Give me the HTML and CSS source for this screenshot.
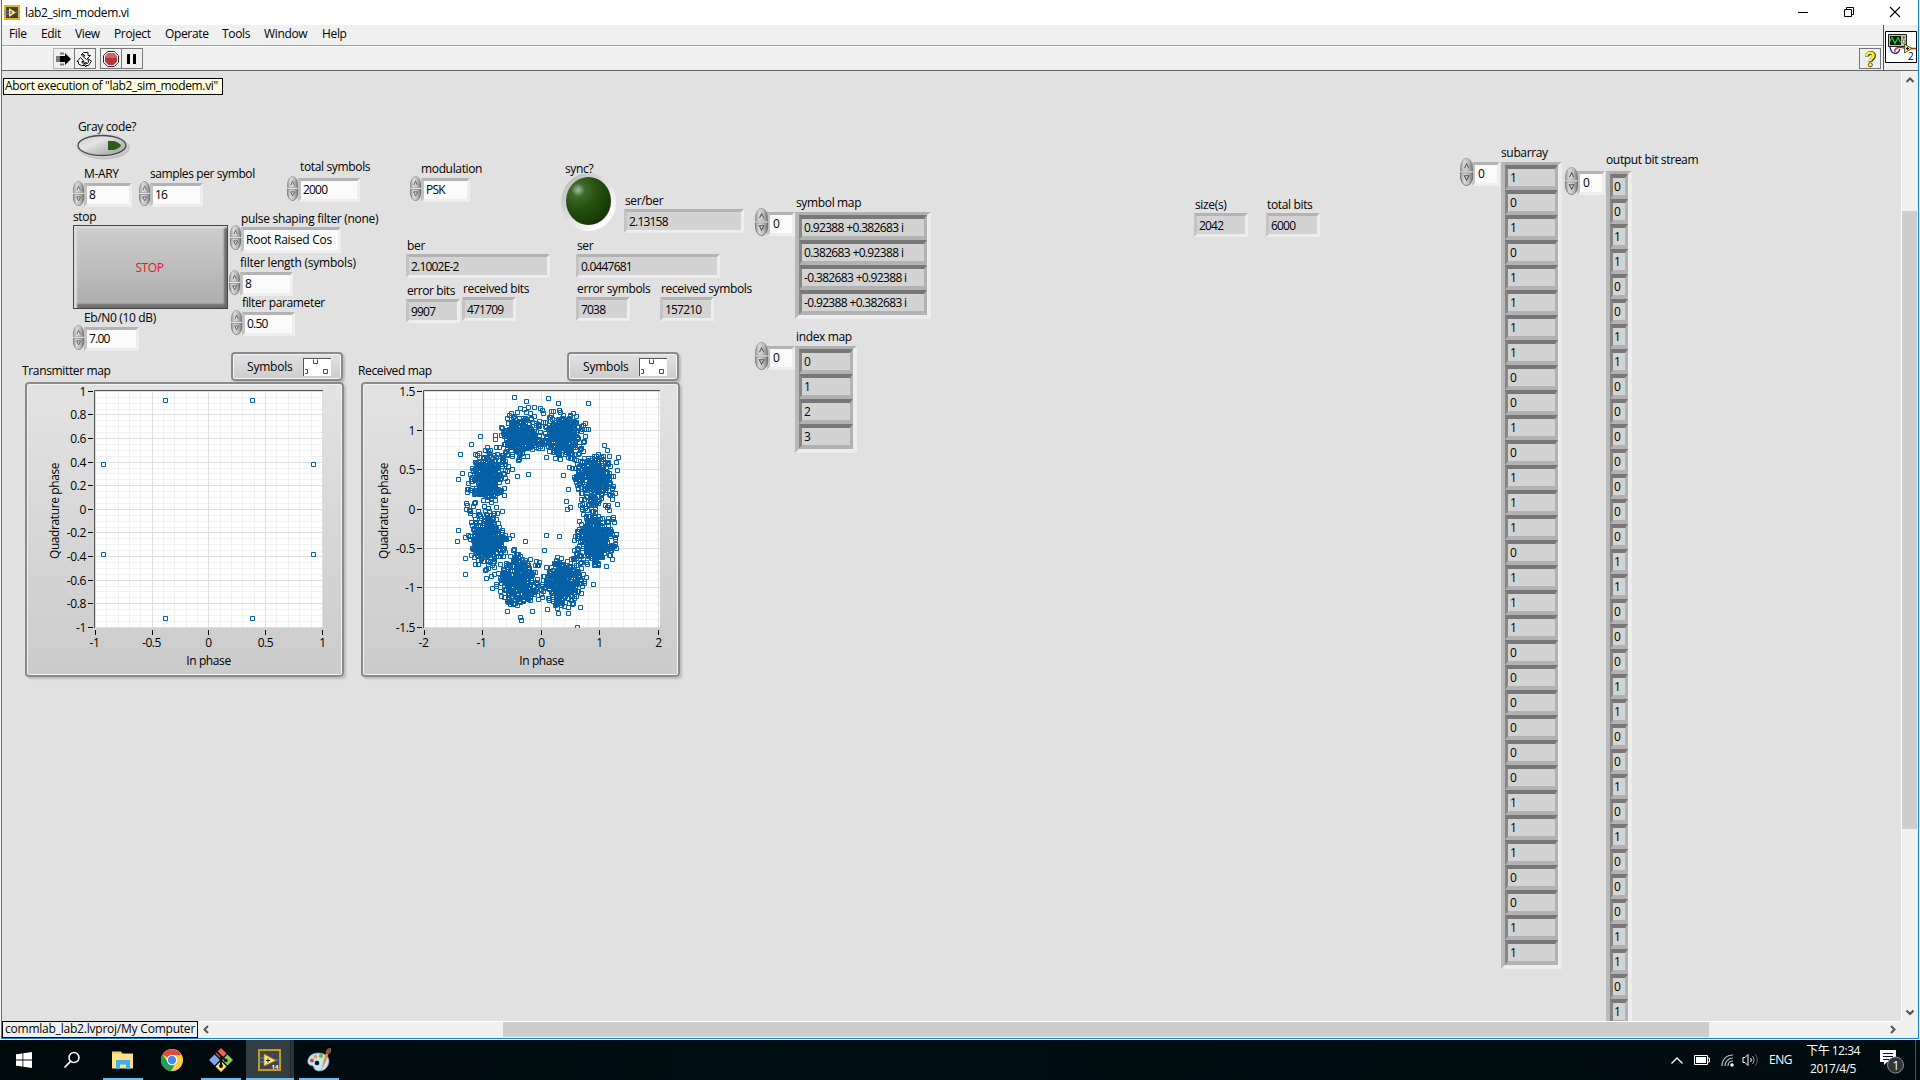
FILE: index.html
```html
<!DOCTYPE html>
<html lang="en">
<head>
<meta charset="utf-8">
<title>lab2_sim_modem.vi</title>
<link rel="stylesheet" href="styles.css">
</head>
<body>
<svg class="defs" width="0" height="0" aria-hidden="true">
  <defs>
    <linearGradient id="steel" x1="0" x2="1" y1="0" y2="0">
      <stop offset="0" stop-color="#8e8e8e"/><stop offset=".3" stop-color="#dadada"/><stop offset=".65" stop-color="#bdbdbd"/><stop offset="1" stop-color="#6c6c6c"/>
    </linearGradient>
    <symbol id="spin" viewBox="0 0 12 26" preserveAspectRatio="none">
      <path d="M.5 12.300C.5 5 2.500 .5 6 .5S11.500 5 11.500 12.300z" fill="url(#steel)" stroke="#8a8a8a" stroke-width=".6"/>
      <path d="M.5 13.700C.5 21 2.500 25.500 6 25.500S11.500 21 11.500 13.700z" fill="url(#steel)" stroke="#6a6a6a" stroke-width=".7"/>
      <path d="M4.200 9.500L6 5.500l1.800 4" fill="#ddd" stroke="#555" stroke-width=".9"/>
      <path d="M4 16.500h4L6 20.500z" fill="#ddd" stroke="#555" stroke-width=".9"/>
      <path d="M1 13h10" stroke="#e4e4e4"/>
    </symbol>
  </defs>
</svg>

<div class="window">
  <header class="titlebar">
    <svg class="app-icon" width="16" height="15" viewBox="0 0 16 15"><path d="M0 0h16v15H0z" fill="#e8b414"/><path d="M2 2h12v11H2z" fill="#3c4248"/><path d="M0 6h5M0 9h5M12 7h4" stroke="#4d8fb5"/><path d="M5 3l7 4.500L5 12z" fill="#ffe37a"/><path d="M7 6v3M9 12h4" stroke="#333"/></svg>
    <span class="title">lab2_sim_modem.vi</span>
    <div class="winbtns">
      <svg width="12" height="12" viewBox="0 0 12 12"><path d="M1 6.500h10" stroke="#000"/></svg>
      <svg width="12" height="12" viewBox="0 0 12 12"><path d="M1.500 3.500h7v7h-7zM3.500 3V1.500h7v7H9" fill="none" stroke="#000"/></svg>
      <svg width="12" height="12" viewBox="0 0 12 12"><path d="M1 1l10 10M11 1L1 11" stroke="#000" stroke-width="1.100"/></svg>
    </div>
  </header>

  <div class="head">
    <div class="bars">
      <nav class="menubar"><span>File</span><span>Edit</span><span>View</span><span>Project</span><span>Operate</span><span>Tools</span><span>Window</span><span>Help</span></nav>
      <div class="toolbar">
        <div class="tb-group">
          <span class="tb tb-run"><svg width="18" height="16" viewBox="0 0 18 16"><path d="M2 5v6M4 5v6" stroke="#000" stroke-width="1"/><path d="M6 1.500v2M8 1.500v2M6 12.500v2M8 12.500v2" stroke="#000"/><path d="M5 5h5V2l6 6-6 6v-3H5z" fill="#000"/></svg></span>
          <span class="tb"><svg width="18" height="16" viewBox="0 0 18 16"><path d="M7.500 1.500h4.500v3h2.500l-4 4-4-3.500h2.500l-1-1.500-3 .5 2.500-2.500zM9 14.500H5.500L2.500 13V10.500H1l3.500-4 3.500 4H6V12h3zM12 8l3.500 2-3 4.500H10V16L7.500 13.500 10 11v1.500h1.500l1-1.500z" fill="#fff" stroke="#111"/></svg></span>
        </div>
        <div class="tb-group">
          <span class="tb"><svg width="18" height="18" viewBox="0 0 18 18"><path d="M5.700 1.500h6.600l4.200 4.200v6.600l-4.200 4.200H5.700L1.500 12.300V5.700z" fill="#fff" stroke="#222"/><path d="M6.300 3h5.400L15 6.300v5.400L11.700 15H6.300L3 11.700V6.300z" fill="#b8363a"/><path d="M6.300 3h5.400L15 6.300V8H3V6.300z" fill="#cf6063"/></svg></span>
          <span class="tb"><svg width="14" height="14" viewBox="0 0 14 14"><path d="M2 2h3v10H2zM8 2h3v10H8z" fill="#000"/></svg></span>
        </div>
        <span class="tb tb-help"><svg width="14" height="18" viewBox="0 0 14 18"><path d="M4 6.500C4 1.800 11 1.800 11 6c0 3-3.700 2.700-3.700 6" fill="none" stroke="#333" stroke-width="4"/><path d="M3.500 6C3.500 1.800 10.500 1.800 10.500 5.500 10.500 8.300 7 8.500 7 11.500" fill="none" stroke="#ffee1a" stroke-width="2.600"/><circle cx="7.300" cy="14.800" r="2.100" fill="#ffee1a" stroke="#333" stroke-width=".8"/></svg></span>
      </div>
    </div>
    <div class="vi-pane">
      <svg class="vi-icon" width="32" height="32" viewBox="0 0 32 32"><path d="M.5.5h31v31H.5z" fill="#fff" stroke="#000"/><path d="M3.500 3.500h18v12h-18z" fill="#c9c3a0" stroke="#222"/><path d="M5 5h11v9H5z" fill="#001800"/><path d="M5 10l2-3.500 3 6 3-6 2.500 5" fill="none" stroke="#25d34a" stroke-width="1.200"/><circle cx="18.700" cy="6.500" r="1" fill="#444"/><circle cx="18.700" cy="10.500" r="1.500" fill="#eee" stroke="#333" stroke-width=".7"/><path d="M5 16c1 8 8 8 10 2" fill="none" stroke="#1a24a0" stroke-width="1.300"/><path d="M10 21c-1-5 5-5 9-4M26 17.500h5" fill="none" stroke="#e02020" stroke-width="1.300"/><path d="M19.500 13v9l7.500-4.500z" fill="#ffe31a" stroke="#333" stroke-width=".8"/><path d="M21 17.500h3M22.500 16v3" stroke="#000"/><text x="23" y="29" class="vi-num">2</text></svg>
    </div>
  </div>

  <div class="work">
    <main class="panel">
      <div class="tooltip">Abort execution of "lab2_sim_modem.vi"</div>

      <span class="lbl l-gray">Gray code?</span>
      <svg class="toggle" width="56" height="28" viewBox="0 0 56 28">
        <defs><linearGradient id="tg" x1="0" y1="0" x2="1" y2="1"><stop offset="0" stop-color="#c8c8c8"/><stop offset=".35" stop-color="#e4e4e4"/><stop offset="1" stop-color="#979797"/></linearGradient></defs>
        <ellipse cx="29" cy="14.500" rx="26" ry="12" fill="#bdbdbd" opacity=".8"/><ellipse cx="27" cy="12.500" rx="26" ry="12" fill="#d6d6d6"/>
        <ellipse cx="27" cy="12.500" rx="24" ry="10" fill="url(#tg)" stroke="#4a4a4a" stroke-width="1.300"/>
        <path d="M33 8h5c3 0 7 2.500 8 4.500-1 2-5 4.500-8 4.500h-5z" fill="#2c5c16"/>
      </svg>
      <span class="lbl l-mary">M-ARY</span>
      <div class="ctl c-mary"><svg class="spin"><use href="#spin"/></svg><span class="field">8</span></div>
      <span class="lbl l-samp">samples per symbol</span>
      <div class="ctl c-samp"><svg class="spin"><use href="#spin"/></svg><span class="field">16</span></div>
      <span class="lbl l-total">total symbols</span>
      <div class="ctl c-total"><svg class="spin"><use href="#spin"/></svg><span class="field">2000</span></div>
      <span class="lbl l-mod">modulation</span>
      <div class="ctl c-mod"><svg class="spin"><use href="#spin"/></svg><span class="field">PSK</span></div>
      <span class="lbl l-stop">stop</span>
      <button class="stop">STOP</button>
      <span class="lbl l-pulse">pulse shaping filter (none)</span>
      <div class="ctl c-pulse"><svg class="spin"><use href="#spin"/></svg><span class="field name">Root Raised Cos</span></div>
      <span class="lbl l-flen">filter length (symbols)</span>
      <div class="ctl c-flen"><svg class="spin"><use href="#spin"/></svg><span class="field">8</span></div>
      <span class="lbl l-fpar">filter parameter</span>
      <div class="ctl c-fpar"><svg class="spin"><use href="#spin"/></svg><span class="field">0.50</span></div>
      <span class="lbl l-eb">Eb/N0 (10 dB)</span>
      <div class="ctl c-eb"><svg class="spin"><use href="#spin"/></svg><span class="field">7.00</span></div>

      <div class="led"><i></i></div>
      <span class="lbl l-sync">sync?</span>
      <span class="lbl l-sb">ser/ber</span><span class="ind i-sb">2.13158</span>
      <span class="lbl l-ber">ber</span><span class="ind i-ber">2.1002E-2</span>
      <span class="lbl l-ser">ser</span><span class="ind i-ser">0.0447681</span>
      <span class="lbl l-ebits">error bits</span><span class="ind i-ebits">9907</span>
      <span class="lbl l-rbits">received bits</span><span class="ind i-rbits">471709</span>
      <span class="lbl l-esym">error symbols</span><span class="ind i-esym">7038</span>
      <span class="lbl l-rsym">received symbols</span><span class="ind i-rsym">157210</span>
      <span class="lbl l-size">size(s)</span><span class="ind i-size">2042</span>
      <span class="lbl l-tbits">total bits</span><span class="ind i-tbits">6000</span>

      <span class="lbl l-smap">symbol map</span>
      <div class="ctl idx c-smap"><svg class="spin"><use href="#spin"/></svg><span class="field">0</span></div>
      <ul class="array a-smap"><li>0.92388 +0.382683 i</li><li>0.382683 +0.92388 i</li><li>-0.382683 +0.92388 i</li><li>-0.92388 +0.382683 i</li></ul>
      <span class="lbl l-imap">index map</span>
      <div class="ctl idx c-imap"><svg class="spin"><use href="#spin"/></svg><span class="field">0</span></div>
      <ul class="array a-imap"><li>0</li><li>1</li><li>2</li><li>3</li></ul>

      <span class="lbl l-sub">subarray</span>
      <div class="ctl idx c-sub"><svg class="spin"><use href="#spin"/></svg><span class="field">0</span></div>
      <ul class="array a-sub"><li>1</li><li>0</li><li>1</li><li>0</li><li>1</li><li>1</li><li>1</li><li>1</li><li>0</li><li>0</li><li>1</li><li>0</li><li>1</li><li>1</li><li>1</li><li>0</li><li>1</li><li>1</li><li>1</li><li>0</li><li>0</li><li>0</li><li>0</li><li>0</li><li>0</li><li>1</li><li>1</li><li>1</li><li>0</li><li>0</li><li>1</li><li>1</li></ul>
      <span class="lbl l-out">output bit stream</span>
      <div class="ctl idx c-out"><svg class="spin"><use href="#spin"/></svg><span class="field">0</span></div>
      <ul class="array a-out"><li>0</li><li>0</li><li>1</li><li>1</li><li>0</li><li>0</li><li>1</li><li>1</li><li>0</li><li>0</li><li>0</li><li>0</li><li>0</li><li>0</li><li>0</li><li>1</li><li>1</li><li>0</li><li>0</li><li>0</li><li>1</li><li>1</li><li>0</li><li>0</li><li>1</li><li>0</li><li>1</li><li>0</li><li>0</li><li>0</li><li>1</li><li>1</li><li>0</li><li>1</li></ul>

      <span class="lbl l-tx">Transmitter map</span>
      <div class="legend g-txl"><span>Symbols</span><svg width="28" height="18" viewBox="0 0 28 18"><path d="M0 0h28v18H0z" fill="#fff"/><path d="M0 .5h28M.5 0v18" stroke="#555"/><path d="M10.500 1.500v4h4v-4M20.500 11.500h4v4h-4zM2 11.500h2.500v4H2" fill="none" stroke="#0560a5"/></svg></div>
      <div class="graph g-tx"><svg id="tx" width="318" height="295"></svg></div>
      <span class="lbl l-rx">Received map</span>
      <div class="legend g-rxl"><span>Symbols</span><svg width="28" height="18" viewBox="0 0 28 18"><path d="M0 0h28v18H0z" fill="#fff"/><path d="M0 .5h28M.5 0v18" stroke="#555"/><path d="M10.500 1.500v4h4v-4M20.500 11.500h4v4h-4zM2 11.500h2.500v4H2" fill="none" stroke="#0560a5"/></svg></div>
      <div class="graph g-rx"><svg id="rx" width="318" height="295"></svg></div>
    </main>
    <div class="vscroll">
      <svg width="16" height="17" viewBox="0 0 16 17"><path d="M4.500 11L8 7.500l3.500 3.500" fill="none" stroke="#555" stroke-width="2"/></svg>
      <i class="thumb"></i>
      <svg width="16" height="17" viewBox="0 0 16 17"><path d="M4.500 6.500L8 10l3.500-3.500" fill="none" stroke="#555" stroke-width="2"/></svg>
    </div>
  </div>

  <footer class="status">
    <div class="project">commlab_lab2.lvproj/My Computer</div>
    <div class="hscroll">
      <svg width="17" height="16" viewBox="0 0 17 16"><path d="M10 4L6.500 7.500 10 11" fill="none" stroke="#555" stroke-width="2"/></svg>
      <i class="thumb"></i>
      <svg width="17" height="16" viewBox="0 0 17 16"><path d="M7 4l3.500 3.500L7 11" fill="none" stroke="#555" stroke-width="2"/></svg>
    </div>
    <i class="corner"></i>
  </footer>
</div>

<div class="taskbar">
  <span class="task start"><svg width="16" height="16" viewBox="0 0 16 16"><path d="M0 2.300L6.500 1.400V7.600H0zM7.300 1.300L16 0v7.600H7.300zM0 8.400h6.500v6.200L0 13.700zM7.300 8.400H16V16l-8.700-1.300z" fill="#fff"/></svg></span>
  <span class="task search"><svg width="18" height="18" viewBox="0 0 18 18"><circle cx="11" cy="6.500" r="5" fill="none" stroke="#fff" stroke-width="1.500"/><path d="M7.500 10.300L1.500 16.500" stroke="#fff" stroke-width="1.700"/></svg></span>
  <span class="task run files"><svg width="22" height="20" viewBox="0 0 22 20"><path d="M0 1.500h9l1.500 2H21V18H0z" fill="#f5cf62"/><path d="M0 4h21v14.500H0z" fill="#ffe08a"/><path d="M4 19v-9h14v9h-4v-4.500H8V19z" fill="#3fb1e8"/></svg></span>
  <span class="task chrome"><svg width="22" height="22" viewBox="0 0 22 22"><circle cx="11" cy="11" r="11" fill="#fc4"/><path d="M11 11L1.500 5.500A11 11 0 0 1 20.500 6H11z" fill="#dc4a3d"/><path d="M1.500 5.500A11 11 0 0 0 10 22l5-8.500-4-2.500-4 2.500z" fill="#1f9d5b"/><path d="M20.500 6H11l4.500 7.500L10.500 22A11 11 0 0 0 20.500 6z" fill="#fc4"/><circle cx="11" cy="11" r="5.200" fill="#fff"/><circle cx="11" cy="11" r="4.200" fill="#4a87ee"/></svg></span>
  <span class="task run git"><svg width="24" height="24" viewBox="0 0 24 24"><path d="M12 0l5.500 5.500L12 11 6.500 5.500z" fill="#f0605c"/><path d="M5.500 6.500L11 12l-5.500 5.500L0 12z" fill="#7fa8ee"/><path d="M18.500 6.500L24 12l-5.500 5.500L13 12z" fill="#88d05a"/><path d="M12 13l5.500 5.500L12 24l-5.500-5.500z" fill="#fbe06a"/><path d="M8 4l4 4v11M12 8l5 5" stroke="#111" stroke-width="2" fill="none"/><circle cx="12" cy="18" r="2" fill="#111"/><circle cx="17" cy="12.500" r="1.800" fill="#111"/></svg></span>
  <span class="task run active"><svg width="24" height="22" viewBox="0 0 24 22"><path d="M1 1h21v20H1z" fill="#40464b" stroke="#c99a1a" stroke-width="2"/><path d="M0 9h7M0 13h7M17 11h7" stroke="#4d8fb5"/><path d="M6 5l12 6.500L6 17z" fill="#ffe37a" stroke="#a87b10" stroke-width=".7"/><path d="M8 11.500h4M10 9.500v4" stroke="#222"/><text x="13.500" y="19.500" class="lv-num">14</text></svg></span>
  <span class="task run paint"><svg width="25" height="24" viewBox="0 0 25 24"><path d="M11 5C4 5 0 10 1 15c1 3 4 2 5 3s1 5 6 5c6 0 10-5 10-10s-5-8-11-8z" fill="#c7e3f3" stroke="#7fa5bd" stroke-width=".7"/><circle cx="5" cy="12.500" r="2" fill="#e04646"/><circle cx="8.500" cy="8.800" r="2" fill="#f2a32d"/><circle cx="14" cy="8" r="2" fill="#62b53e"/><circle cx="10" cy="15" r="2.300" fill="#0a1a20"/><path d="M14 23l3-11 2 .7z" fill="#e88a2a"/><path d="M16.500 13L19 5l2.500 1L18.500 14z" fill="#e88a2a"/><path d="M19 5c-1-3 2-5 5-5 0 2 1 5-2.500 6z" fill="#8a5a3a"/></svg></span>
  <div class="tray">
    <svg class="t-up" width="14" height="9" viewBox="0 0 14 9"><path d="M1.500 7.500L7 2l5.500 5.500" fill="none" stroke="#fff" stroke-width="1.400"/></svg>
    <svg class="t-bat" width="16" height="10" viewBox="0 0 16 10"><path d="M.5.500h13v9H.5zM14 3h1.500v4H14" fill="none" stroke="#fff"/><path d="M2 2h10v6H2z" fill="#fff"/></svg>
    <svg class="t-wifi" width="13" height="13" viewBox="0 0 13 13"><path d="M1 12C1 5.500 5.500 1 12 1M4 12c0-4.500 3.500-8 8-8M7 12c0-3 2-5 5-5" fill="none" stroke="#b9bfc1" stroke-width="1.200"/><circle cx="11" cy="11" r="1.700" fill="#fff"/></svg>
    <svg class="t-vol" width="17" height="14" viewBox="0 0 17 14"><path d="M1 4.500h2l3-3v11l-3-3H1z" fill="none" stroke="#fff"/><path d="M8.500 5c1 1 1 3 0 4" fill="none" stroke="#fff"/><path d="M10.500 3c2 2 2 6 0 8" fill="none" stroke="#aaa"/><path d="M13 1c3 3 3 9 0 12" fill="none" stroke="#666"/></svg>
    <span class="t-lang">ENG</span>
    <div class="clock"><span>下午 12:34</span><span>2017/4/5</span></div>
    <div class="notify"><svg width="26" height="26" viewBox="0 0 26 26"><path d="M1 1h16v12H8l-3 3v-3H1z" fill="#fff"/><path d="M4 4.500h10M4 7.500h10M4 10.500h6" stroke="#000c10"/><circle cx="16.500" cy="16" r="8" fill="#2d3538" stroke="#8b9092"/><text x="13.600" y="20.500" class="badge">1</text></svg></div>
    <i class="peek"></i>
  </div>
</div>
<script src="plots.js"></script>
</body>
</html>
```
FILE: styles.css
```css
* { box-sizing: border-box; }
body { margin: 0; width: 1920px; height: 1080px; overflow: hidden; display: flex; flex-direction: column; background: #f2f7fb; font: 12px/16px "Open Sans", "Noto Sans", sans-serif; letter-spacing: -.35px; color: #000; }
.defs { position: absolute; }
svg { display: block; flex: none; }

.window { height: 1039px; margin: 0 1px 1px; border: solid #1883d7; border-width: 0 1px 1px; background: #f0f0f0; display: flex; flex-direction: column; flex: none; }
.titlebar { height: 25px; background: #fff; display: flex; align-items: center; padding-left: 2px; }
.app-icon { margin-right: 5px; }
.title { flex: 1; padding-top: 1px; }
.winbtns { display: flex; gap: 34px; padding-right: 17px; margin-top: -2px; }

.head { height: 46px; display: flex; border-bottom: 1px solid #646464; }
.bars { flex: 1; display: flex; flex-direction: column; }
.menubar { height: 21px; border-bottom: 1px solid #a0a0a0; padding: 1px 0 0 7px; display: grid; grid-template-columns: 32px 34px 39px 51px 57px 42px 58px auto; }
.toolbar { flex: 1; border-top: 1px solid #fff; display: flex; align-items: flex-start; padding: 1px 2px 0 51px; gap: 4px; }
.tb-group { display: flex; }
.tb { width: 22px; height: 21px; border: 1px solid #777; display: flex; align-items: center; justify-content: center; }
.tb + .tb { margin-left: -1px; }
.tb-run { border-color: #b4b4b4; }
.tb-help { margin-left: auto; }
.vi-pane { width: 35px; border-left: 1px solid #555; padding: 6px 0 0 1px; }
.vi-num { font-size: 10px; }

.work { height: 950px; display: flex; }
.panel { flex: 1; background: #e1e1e1; }
.vscroll { width: 17px; border-left: 1px solid #fff; display: flex; flex-direction: column; justify-content: space-between; }
.vscroll .thumb { width: 15px; height: 618px; background: #cdcdcd; margin: 123px 0 auto; }
.status { height: 17px; display: flex; }
.project { width: 196px; border: 1px solid #000; line-height: 14px; padding-left: 2px; white-space: nowrap; letter-spacing: -.22px; }
.hscroll { flex: 1; border-top: 1px solid #fff; display: flex; justify-content: space-between; }
.hscroll .thumb { width: 1206px; height: 15px; background: #cdcdcd; margin-right: -113px; }
.corner { width: 17px; }

/* Front panel objects sit on a free canvas */
.tooltip, .lbl, .ctl, .ind, .array, .led, .toggle, .stop, .graph, .legend { position: absolute; white-space: nowrap; }
.lbl { padding-top: 1px; }
.tooltip { left: 3px; top: 78px; width: 220px; height: 17px; border: 1px solid #000; background: #ffffe1; padding-left: 1px; line-height: 14px; }
.ctl { display: flex; align-items: flex-start; }
.spin { width: 12px; height: 25px; transform: translateX(.6px); }
.field { margin-top: 2px; flex: 1; height: 24px; padding-left: 2px; line-height: 18px; background: #fafafa; }
.field, .ind { border: 3px solid; border-color: #b3b3b3 #eee #eee #c3c3c3; letter-spacing: -.8px; }
.field.name { height: 26px; line-height: 19px; letter-spacing: -.25px; }
.ind { height: 24px; padding-left: 2px; line-height: 19px; background: #d3d3d3; }
.idx .spin { width: 14px; height: 28px; }
.idx .field { margin: 4px 0 0 -1px; padding-left: 3px; }
.array { margin: 0; padding: 0; list-style: none; border: 4px solid; border-top-width: 3px; border-color: #b0b0b0 #ededed #ededed #b8b8b8; letter-spacing: -.65px; overflow: hidden; }
.array li { height: 25px; border: solid; border-width: 4px 3px 4px 3px; border-color: #777 #b2b2b2 #b2b2b2 #868686; background: #d3d3d3; padding-left: 2px; line-height: 17px; }
.a-out li { padding-left: 1px; }

.l-gray { left: 78px; top: 118px; } .toggle { left: 75px; top: 133px; }
.l-mary { left: 84px; top: 165px; } .c-mary { left: 72px; top: 181px; width: 60px; }
.l-samp { left: 150px; top: 165px; letter-spacing: -.4px; } .c-samp { left: 138px; top: 181px; width: 65px; }
.l-total { left: 300px; top: 158px; } .c-total { left: 286px; top: 176px; width: 74px; }
.l-mod { left: 421px; top: 160px; } .c-mod { left: 409px; top: 176px; width: 61px; }
.l-stop { left: 73px; top: 208px; }
.l-pulse { left: 241px; top: 210px; letter-spacing: -.3px; } .c-pulse { left: 229px; top: 225px; width: 112px; }
.l-flen { left: 240px; top: 254px; letter-spacing: -.22px; } .c-flen { left: 228px; top: 270px; width: 65px; }
.l-fpar { left: 242px; top: 294px; } .c-fpar { left: 230px; top: 310px; width: 65px; }
.l-eb { left: 84px; top: 309px; } .c-eb { left: 72px; top: 325px; width: 67px; }
.l-sync { left: 565px; top: 160px; }
.l-sb { left: 625px; top: 192px; } .i-sb { left: 624px; top: 209px; width: 120px; }
.l-ber { left: 407px; top: 237px; } .i-ber { left: 406px; top: 254px; width: 144px; }
.l-ser { left: 577px; top: 237px; } .i-ser { left: 576px; top: 254px; width: 144px; }
.l-ebits { left: 407px; top: 282px; letter-spacing: -.42px; } .i-ebits { left: 406px; top: 299px; width: 54px; }
.l-rbits { left: 463px; top: 280px; } .i-rbits { left: 462px; top: 297px; width: 54px; }
.l-esym { left: 577px; top: 280px; } .i-esym { left: 576px; top: 297px; width: 54px; }
.l-rsym { left: 661px; top: 280px; } .i-rsym { left: 660px; top: 297px; width: 54px; }
.l-size { left: 1195px; top: 196px; } .i-size { left: 1194px; top: 213px; width: 54px; }
.l-tbits { left: 1267px; top: 196px; } .i-tbits { left: 1266px; top: 213px; width: 54px; }
.l-smap { left: 796px; top: 194px; } .c-smap { left: 754px; top: 208px; width: 41px; } .a-smap { left: 795px; top: 212px; width: 136px; }
.l-imap { left: 796px; top: 328px; } .c-imap { left: 754px; top: 342px; width: 41px; } .a-imap { left: 795px; top: 346px; width: 62px; }
.l-sub { left: 1501px; top: 144px; } .c-sub { left: 1459px; top: 158px; width: 41px; } .a-sub { left: 1501px; top: 162px; width: 61px; }
.l-out { left: 1606px; top: 151px; } .c-out { left: 1564px; top: 167px; width: 41px; } .a-out { left: 1606px; top: 171px; width: 26px; height: 850px; border-bottom: 0; }
.l-tx { left: 22px; top: 362px; } .g-tx { left: 25px; top: 382px; } .g-txl { left: 231px; top: 352px; }
.l-rx { left: 358px; top: 362px; } .g-rx { left: 361px; top: 382px; } .g-rxl { left: 567px; top: 352px; }

.stop { left: 73px; top: 225px; width: 155px; height: 84px; padding: 1px 2px 0 0; border: 1px solid #444; background: linear-gradient(#cdcdcd, #adadad); box-shadow: inset 4px 3px 2px -1px #dcdcdc, inset -4px -5px 2px -1px #6e6e6e; font: 12px/16px "Open Sans", sans-serif; letter-spacing: -.4px; color: #f01020; }
.led { left: 561px; top: 173px; width: 55px; height: 58px; border-radius: 50%; background: linear-gradient(135deg, #bdbdbd 10%, #dedede 45%, #fff 85%); padding: 4px 5px 6px; }
.led i { display: block; height: 48px; width: 45px; border-radius: 50%; background: radial-gradient(circle at 27% 27%, #a9bf9f 0, #3d6a2b 14%, #26500f 40%, #1b3f09 65%, #0c2203 100%); }

.graph { width: 319px; height: 295px; padding-left: 1px; border-radius: 4px; background: linear-gradient(#e3e3e3, #cbcbcb); box-shadow: inset 0 0 0 2px #8a8a8a, inset 0 0 0 3px #f2f2f2, 2px 2px 2px #bcbcbc; }
.legend { width: 112px; height: 29px; border-radius: 4px; background: linear-gradient(#e3e3e3, #cbcbcb); box-shadow: inset 0 0 0 2px #8a8a8a, inset 0 0 0 3px #f2f2f2, 2px 2px 2px #bcbcbc; display: flex; align-items: center; justify-content: space-between; padding: 1px 12px 0 16px; letter-spacing: -.2px; }
.graph text { font-size: 12px; letter-spacing: -.4px; }

.taskbar { height: 40px; flex: none; background: linear-gradient(90deg, #00090c, #000f14 40%, #000c10); display: flex; color: #fff; }
.task { width: 49px; display: flex; align-items: center; justify-content: center; margin-right: 0; }
.start { width: 48px; } .search { width: 48px; }
.run { border-bottom: 2px solid #76b9ed; padding-top: 2px; width: 40px; }
.files { margin-left: 7px; }
.chrome { width: 58px; }
.active { width: 48px; background: linear-gradient(90deg, #333e42 44px, #142024 44px, #2a3538 45px); margin-left: 5px; }
.paint { margin-left: 5px; }
.tray { flex: 1; display: flex; align-items: center; justify-content: flex-end; }
.t-up { margin-right: 10px; } .t-bat { margin-right: 11px; } .t-wifi { margin-right: 8px; } .t-vol { margin-right: 10px; }
.t-lang { width: 36px; letter-spacing: -.5px; }
.clock { width: 56px; display: flex; flex-direction: column; align-items: center; line-height: 18px; font-family: "Open Sans", "Noto Sans CJK TC", sans-serif; letter-spacing: -.5px; white-space: nowrap; margin-right: 18px; }
.notify { margin: 4px 10px 0 0; }
.peek { width: 5px; height: 40px; border-left: 1px solid #4c5557; }
.badge { font-size: 12px; fill: #fff; }
.lv-num { font-size: 6px; font-weight: bold; fill: #fff; letter-spacing: 0; }
```
FILE: plots.js
```js
// Draws the two constellation graphs on the front panel.
const BLUE = '#0560a5';

function axisTicks(min, max, step) {
  const out = [];
  for (let i = 0; i <= Math.round((max - min) / step); i++) out.push(min + i * step);
  return out;
}

function drawGraph(id, o) {
  const X = v => Math.floor(o.x0 + (v - o.xmin) / (o.xmax - o.xmin) * (o.x1 - o.x0)) + 0.5;
  const Y = v => Math.floor(245.3 - (v - o.ymin) / (o.ymax - o.ymin) * 236) + 0.5;
  const left = o.left, right = o.right, top = 8, bottom = 246;
  const grid = (xs, ys, color) => '<path stroke="' + color + '" d="' +
    xs.map(x => 'M' + X(x) + ' ' + top + 'V' + bottom).join('') +
    ys.map(y => 'M' + left + ' ' + Y(y) + 'H' + right).join('') + '"/>';
  const xs = axisTicks(o.xmin, o.xmax, o.xstep), ys = axisTicks(o.ymin, o.ymax, o.ystep);
  let s = '<path fill="#fff" d="M' + left + ' ' + top + 'H' + right + 'V' + bottom + 'H' + left + 'z"/>';
  s += grid(axisTicks(o.xmin, o.xmax, o.xminor), axisTicks(o.ymin, o.ymax, o.yminor), '#f1f1f1');
  s += grid(xs, ys, '#dedede');
  s += '<path fill="none" stroke="#555" d="M' + (left + .5) + ' ' + bottom + 'V' + (top + .5) + 'H' + right + '"/>';
  s += '<path stroke="#000" d="' + xs.map(x => 'M' + X(x) + ' 248v5').join('') +
    ys.map(y => 'M' + (left - 6) + ' ' + Y(y) + 'h5').join('') + '"/>';
  const fmt = v => String(+v.toFixed(1));
  xs.forEach(x => { s += '<text text-anchor="middle" x="' + (X(x) - (x < 0 ? 1 : 0)) + '" y="264.500">' + fmt(x) + '</text>'; });
  ys.forEach(y => { s += '<text text-anchor="end" x="' + (left - 8) + '" y="' + (Y(y) + 4.5) + '">' + fmt(y) + '</text>'; });
  s += '<text text-anchor="middle" x="' + (left + right) / 2 + '" y="282.500">In phase</text>';
  s += '<text text-anchor="middle" transform="translate(' + o.ylabel + ' 129) rotate(-90)">Quadrature phase</text>';
  s += '<path fill="none" stroke="' + BLUE + '" d="' +
    o.points.map(p => 'M' + (X(p[0]) - 2) + ' ' + (Y(p[1]) - 2) + 'h4v4h-4z').join('') + '"/>';
  if (o.extra) s += '<path fill="none" stroke="' + BLUE + '" d="' +
    o.extra.map(p => 'M' + (p[0] - 2) + ' ' + (p[1] - 2) + 'h4v4h-4z').join('') + 'M213.500 246v-2.500h4V246"/>';
  document.getElementById(id).innerHTML = s;
}

const ideal = [];
for (let k = 0; k < 8; k++) {
  const a = Math.PI / 8 + k * Math.PI / 4;
  ideal.push([Math.cos(a), Math.sin(a)]);
}

// Repeatable channel noise
let seed = 20170405;
function rnd() {
  seed = (seed + 0x6D2B79F5) | 0;
  let t = Math.imul(seed ^ (seed >>> 15), 1 | seed);
  t = (t + Math.imul(t ^ (t >>> 7), 61 | t)) ^ t;
  return ((t ^ (t >>> 14)) >>> 0) / 4294967296;
}
function gauss() { return Math.sqrt(-2 * Math.log(1 - rnd())) * Math.cos(2 * Math.PI * rnd()); }

const received = [];
while (received.length < 2700) {
  const c = ideal[Math.floor(rnd() * 8)];
  const p = [c[0] + gauss() * 0.165, c[1] + gauss() * 0.158];
  const r = Math.hypot(p[0], p[1]);
  if (r > 0.66 && r < 1.34) received.push(p);
}

// Far-off samples, in graph pixels
const strays = [[496,175],[532,187],[598,178],[718,193],[626,193],[574,208],[334,346],[365,316],[392,290],[326,421],[340,403],
  [806,355],[802,370],[805,393],[764,319],[775,334],[538,406],[505,412],[643,409],[466,469],[460,517],[652,487],[655,511],[664,505],
  [592,589],[631,592],[529,607],[586,634],[490,589],[328,574],[325,607],[349,658],[349,706],[412,718],[475,817],[550,817],
  [514,835],[517,844],[628,823],[658,823],[694,805],[733,736],[802,628],[790,661],[805,496],[802,586],[658,451]]
  .map(p => [Math.round(p[0] / 3) - 12.5, Math.round(p[1] / 3) - 42.5]);

drawGraph('tx', { x0: 69.3, x1: 296.4, left: 68, right: 297, xmin: -1, xmax: 1, xstep: .5, xminor: .1,
  ymin: -1, ymax: 1, ystep: .2, yminor: .05, ylabel: 33, points: ideal });
drawGraph('rx', { x0: 62.3, x1: 296.400, left: 61, right: 298, xmin: -2, xmax: 2, xstep: 1, xminor: .2,
  ymin: -1.5, ymax: 1.5, ystep: .5, yminor: .1, ylabel: 26, points: received, extra: strays });
```
